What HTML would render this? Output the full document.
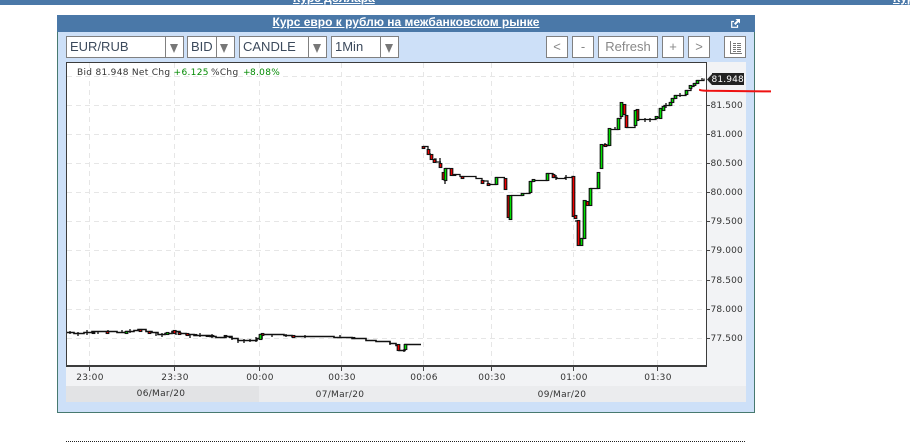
<!DOCTYPE html>
<html><head><meta charset="utf-8"><style>
html,body{margin:0;padding:0;background:#fff;width:910px;height:448px;overflow:hidden}
div{position:absolute;box-sizing:border-box}
.sel,.btn{background:#fff;border:1px solid #808080;top:36px;height:22px;font:13px/20px "Liberation Sans",sans-serif;color:#3c4a5c;white-space:nowrap}
.sel span{position:absolute;left:3px;top:0}
.sep{top:0;width:1px;height:20px;background:#808080}
.tri{top:7px;width:0;height:0;border-left:4.5px solid transparent;border-right:4.5px solid transparent;border-top:9px solid #777}
.btn{text-align:center;color:#888;font-size:13px}
.lbl{font:9px/12px "DejaVu Sans",sans-serif;color:#333;letter-spacing:.3px;white-space:nowrap}
.n{letter-spacing:.15px}
.g{color:#008a00}
.t{transform:translateX(-50%)}
.c rect{width:2.6px;stroke-width:1.1px}
</style></head><body>
<div style="left:0;top:0;width:910px;height:5px;background:#4a78a8;overflow:hidden">
<div style="left:293px;top:-9px;font:bold 12px/14px 'Liberation Sans',sans-serif;color:#fff;text-decoration:underline">Курс доллара</div>
<div style="left:893px;top:-9px;font:bold 12px/14px 'Liberation Sans',sans-serif;color:#fff;text-decoration:underline;white-space:nowrap">Курс</div>
</div>
<div style="left:57px;top:15px;width:698px;height:398px;background:#cde0f8;border:1px solid #47796f;border-top:0"></div>
<div style="left:57px;top:15px;width:698px;height:17px;background:#4a78a8"></div>
<div style="left:57px;top:15px;width:698px;height:16px;text-align:center;font:bold 12px/15px 'Liberation Sans',sans-serif;color:#fff;text-decoration:underline">Курс евро к рублю на межбанковском рынке</div>
<svg style="position:absolute;left:731px;top:19px" width="9" height="9" viewBox="0 0 9 9"><path d="M3 2.5H.7V8.3H6.5V6" fill="none" stroke="#fff" stroke-width="1.2"/><path d="M4.5 0H9V4.5L7.5 3 4.5 6 3 4.5 6 1.5Z" fill="#fff"/></svg>

<div class="sel" style="left:66px;width:118px"><span>EUR/RUB</span><div class="sep" style="left:98px"></div><div class="tri" style="left:103px"></div></div>
<div class="sel" style="left:187px;width:48px"><span>BID</span><div class="sep" style="left:28px"></div><div class="tri" style="left:32px"></div></div>
<div class="sel" style="left:239px;width:88px"><span>CANDLE</span><div class="sep" style="left:68px"></div><div class="tri" style="left:73px"></div></div>
<div class="sel" style="left:331px;width:68px"><span>1Min</span><div class="sep" style="left:48px"></div><div class="tri" style="left:53px"></div></div>

<div class="btn" style="left:546px;width:22px">&lt;</div>
<div class="btn" style="left:572px;width:22px">-</div>
<div class="btn" style="left:598px;width:60px">Refresh</div>
<div class="btn" style="left:662px;width:22px">+</div>
<div class="btn" style="left:688px;width:22px">&gt;</div>
<div class="btn" style="left:724px;width:22px"><svg style="position:absolute;left:5px;top:4px" width="12" height="13" viewBox="0 0 12 13"><path d="M.5 0V12.5H12M3 2.5H6M7 2.5H11M3 4.5H6M7 4.5H11M3 6.5H6M7 6.5H11M3 8.5H6M7 8.5H11M3 10.5H6M7 10.5H11" fill="none" stroke="#777"/></svg></div>

<div style="left:66px;top:62px;width:680px;height:340px;background:#f2f3f5"></div>
<div style="left:66px;top:386px;width:193px;height:16px;background:#e2e3e5"></div>
<div style="left:259px;top:386px;width:487px;height:16px;background:#ebecee"></div>
<div style="left:66px;top:62px;width:641px;height:305px;background:#fff;border:1px solid #3c3c3c;border-width:1px 1px 2px 1px"></div>

<svg style="position:absolute;left:0;top:0" width="910" height="448">
<g stroke="#e6e6e6" stroke-dasharray="5 4" fill="none" shape-rendering="crispEdges">
<path d="M67 76.5H706M67 105.5H706M67 134.5H706M67 163.5H706M67 192.5H706M67 221.5H706M67 250.5H706M67 280.5H706M67 309.5H706M67 338.5H706"/>
<path d="M89.5 63V365M174.5 63V365M259.5 63V365M341.5 63V365M423.5 63V365M491.5 63V365M573.5 63V365M657.5 63V365"/>
</g>
<path shape-rendering="crispEdges" d="M89.5 366V371M174.5 366V371M259.5 366V371M341.5 366V371M423.5 366V371M491.5 366V371M573.5 366V371M657.5 366V371M707 105.5H710M707 134.5H710M707 163.5H710M707 192.5H710M707 221.5H710M707 250.5H710M707 280.5H710M707 309.5H710M707 338.5H710" stroke="#444" fill="none"/>
<g fill="none" stroke="#111" stroke-width="1.3">
<path d="M67 332.5H74V333.5H84V332.5H92V331.5H117V332.5H126V331.5H134V330.5H138V329.5H146V331.5H152V332.5H158V334.5H165V333.5H172V331.5H180V333.5H186V334.5H194V335.5H210V336.5H216V337.5H226V336.5H232V338.5H238V340.5H257V338.5H262V334.5H284V335.5H292V336.5H334V337.5H352V338.5H366V340.5H376V341.5H390V343.5H396V345.5H399V350.5H405V344.5H421" stroke-width="1.6"/>
<path d="M70 331V334M78 332V336M87 330V335M98 331V334M108 330V334M122 330V333M130 329V333M156 332V336M162 333V337M176 330V335M190 334V338M200 333V337M212 334V338M225 335V338M232 337V340M238 339V343M244 339V343M250 339V342M256 337V342M272 334V337M286 334V337M305 335V338M340 335V338M390 342V345M404 349V352M440 158V168M445 178V184"/>
<path d="M423 146.5H428V149.5M428 154H431M434 159H436V162H441M445 168.5H450M454 174.5H460V176.5H476V178.5H482V181H488V184.5H496V177.5H505M511 195.5H522V193.5H530V181.5H533V180.5H547V173.5H553V177.5H557V178.5H565V177.5H572V176.5H574M578 221H575M581 238.5H584V201H587M590 188.5H598V172.5M601 168.5V144.5M602 145.5H609V129.5H618V118.5H621V103.5M626 127.5H635V110.5M638 119.5H656V117.5H660V108.5H664V105.5H670V102.5H672V98.5H675V95.5H686V90.5H691V86.5H694V83.5H697V80.5H704V78.5"/>
<path d="M556 175V180M566 175V180M605 143V147M615 127V130M645 118V122M650 118V122M666 103V108M680 93V97M702 78V81"/>
</g>
<g class="c" stroke="#111" fill="#f00000" transform="translate(-.3 0)">
<rect x="422.5" y="146.5" width="3" height="2"/><rect x="427.5" y="149.5" width="3" height="5"/><rect x="430.5" y="154.5" width="3" height="5"/><rect x="433.5" y="159.5" width="3" height="3"/><rect x="439.5" y="163.5" width="2" height="4"/><rect x="442.5" y="172.5" width="2" height="7"/><rect x="450.5" y="168.5" width="3" height="7"/><rect x="461.5" y="176.5" width="2" height="2"/><rect x="481.5" y="180.5" width="3" height="3"/><rect x="487.5" y="183.5" width="3" height="2"/><rect x="504.5" y="178.5" width="2" height="11"/><rect x="507.5" y="195.5" width="2" height="22"/><rect x="552.5" y="174.5" width="2" height="3"/><rect x="572.5" y="176.5" width="2" height="40"/><rect x="574.5" y="215.5" width="2" height="3"/><rect x="577.5" y="220.5" width="3" height="25"/><rect x="586.5" y="201.5" width="2" height="4"/><rect x="604.5" y="144.5" width="1" height="2"/><rect x="623.5" y="104.5" width="2" height="10"/><rect x="625.5" y="115.5" width="2" height="12"/><rect x="636.5" y="109.5" width="2" height="11"/>
<rect x="106.5" y="331.5" width="3" height="2" /><rect x="139.5" y="329.5" width="3" height="2"/><rect x="148.5" y="331.5" width="3" height="2"/><rect x="173.5" y="330.5" width="3" height="3"/><rect x="178.5" y="332.5" width="3" height="2"/><rect x="186.5" y="333.5" width="3" height="2"/><rect x="211.5" y="335.5" width="3" height="1"/><rect x="224.5" y="335.5" width="3" height="1"/><rect x="229.5" y="336.5" width="3" height="1"/><rect x="261.5" y="333.5" width="2" height="2"/><rect x="292.5" y="335.5" width="2" height="2"/><rect x="397.5" y="344.5" width="2" height="6"/><rect x="352.5" y="337.5" width="3" height="1"/>
</g>
<g class="c" stroke="#111" fill="#00e000" transform="translate(-.3 0)">
<rect x="444.5" y="168.5" width="2" height="12"/><rect x="453.5" y="174.5" width="2" height="1"/><rect x="495.5" y="177.5" width="2" height="7"/><rect x="509.5" y="195.5" width="2" height="24"/><rect x="521.5" y="193.5" width="2" height="2"/><rect x="529.5" y="181.5" width="2" height="11"/><rect x="532.5" y="179.5" width="2" height="2"/><rect x="546.5" y="173.5" width="2" height="7"/><rect x="580.5" y="238.5" width="2" height="7"/><rect x="583.5" y="200.5" width="2" height="38"/><rect x="589.5" y="188.5" width="2" height="17"/><rect x="597.5" y="172.5" width="2" height="16"/><rect x="600.5" y="144.5" width="2" height="24"/><rect x="608.5" y="128.5" width="2" height="17"/><rect x="617.5" y="118.5" width="2" height="11"/><rect x="620.5" y="102.5" width="2" height="14"/><rect x="634.5" y="110.5" width="2" height="15"/><rect x="655.5" y="116.5" width="3" height="2"/><rect x="659.5" y="108.5" width="2" height="10"/><rect x="662.5" y="106.5" width="2" height="4"/><rect x="669.5" y="102.5" width="2" height="3"/><rect x="671.5" y="98.5" width="2" height="4"/><rect x="674.5" y="95.5" width="2" height="3"/><rect x="685.5" y="90.5" width="2" height="4"/><rect x="689.5" y="85.5" width="2" height="3"/><rect x="693.5" y="83.5" width="2" height="2"/><rect x="696.5" y="80.5" width="2" height="3"/>
<rect x="92.5" y="332.5" width="3" height="1"/><rect x="125.5" y="331.5" width="2" height="2"/><rect x="166.5" y="332.5" width="2" height="2"/><rect x="194.5" y="334.5" width="3" height="1"/><rect x="206.5" y="335.5" width="2" height="1"/><rect x="259.5" y="334.5" width="2" height="5"/><rect x="404.5" y="344.5" width="2" height="5"/></g>
</svg>
<svg style="position:absolute;left:699px;top:88px" width="74" height="6"><path d="M0 1.5C2 3 6 2.6 10 2.8L72 3.4" fill="none" stroke="#ee1111" stroke-width="2"/></svg>

<div class="lbl" style="left:77px;top:67px">Bid 81.948 Net Chg</div>
<div class="lbl g" style="left:173.5px;top:67px">+</div>
<div class="lbl g" style="left:181.5px;top:67px">6.125</div>
<div class="lbl" style="left:211px;top:67px">%Chg</div>
<div class="lbl g" style="left:243px;top:67px">+</div>
<div class="lbl g" style="left:250px;top:67px">8.08%</div>

<svg style="position:absolute;left:707px;top:73px" width="8" height="13"><path d="M0 6.5L5 1H8V12H5Z" fill="#222"/></svg>
<div style="left:712px;top:73px;width:32px;height:12px;background:#222"></div>
<div class="lbl n" style="left:711.5px;top:74px;color:#fff">81.948</div>
<div class="lbl n" style="left:710.5px;top:100px">81.500</div>
<div class="lbl n" style="left:710.5px;top:129px">81.000</div>
<div class="lbl n" style="left:710.5px;top:158px">80.500</div>
<div class="lbl n" style="left:710.5px;top:187px">80.000</div>
<div class="lbl n" style="left:710.5px;top:216px">79.500</div>
<div class="lbl n" style="left:710.5px;top:245px">79.000</div>
<div class="lbl n" style="left:710.5px;top:275px">78.500</div>
<div class="lbl n" style="left:710.5px;top:304px">78.000</div>
<div class="lbl n" style="left:710.5px;top:333px">77.500</div>

<div class="lbl t" style="left:90px;top:372px">23:00</div>
<div class="lbl t" style="left:175px;top:372px">23:30</div>
<div class="lbl t" style="left:260px;top:372px">00:00</div>
<div class="lbl t" style="left:342px;top:372px">00:30</div>
<div class="lbl t" style="left:424px;top:372px">00:06</div>
<div class="lbl t" style="left:492px;top:372px">00:30</div>
<div class="lbl t" style="left:574px;top:372px">01:00</div>
<div class="lbl t" style="left:658px;top:372px">01:30</div>
<div class="lbl t" style="left:161px;top:388px">06/Mar/20</div>
<div class="lbl t" style="left:340px;top:389px">07/Mar/20</div>
<div class="lbl t" style="left:562px;top:389px">09/Mar/20</div>

<div style="left:66px;top:441px;width:679px;height:0;border-top:1px dotted #222"></div>
</body></html>
